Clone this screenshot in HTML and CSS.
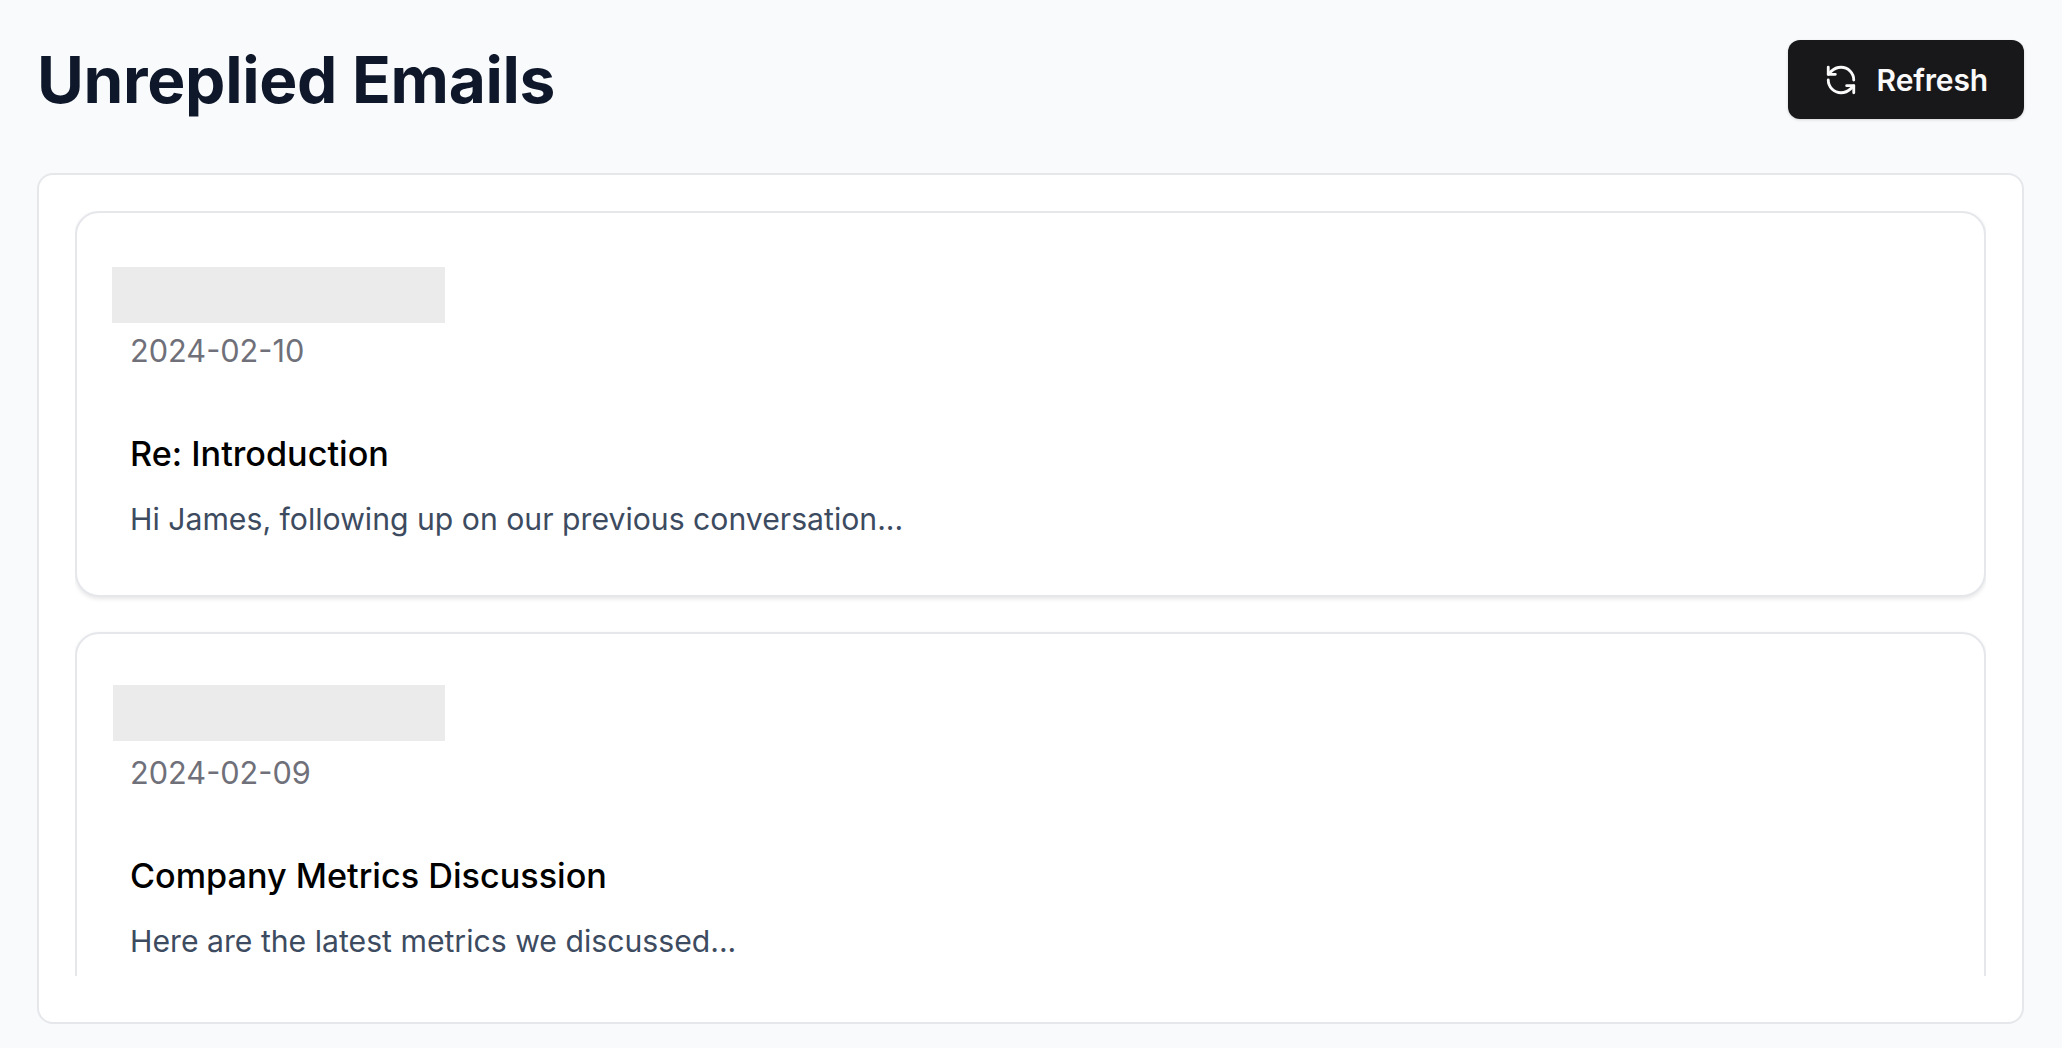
FILE: index.html
```html
<!DOCTYPE html>
<html lang="en">
<head>
    <meta charset="UTF-8">
    <meta name="viewport" content="width=device-width, initial-scale=1.0">
    <title>Unreplied Emails</title>
    <link rel="stylesheet" href="styles.css">
</head>
<body>
    <header class="page-header">
        <h1>Unreplied Emails</h1>
        <button class="btn">
            <svg class="btn-icon" viewBox="0 0 24 24" fill="none" stroke="currentColor" stroke-width="2" stroke-linecap="round" stroke-linejoin="round">
                <path d="M21 12a9 9 0 0 0-9-9 9.75 9.75 0 0 0-6.74 2.74L3 8"/>
                <path d="M3 3v5h5"/>
                <path d="M3 12a9 9 0 0 0 9 9 9.75 9.75 0 0 0 6.74-2.74L21 16"/>
                <path d="M16 16h5v5"/>
            </svg>
            Refresh
        </button>
    </header>

    <main class="panel">
        <div class="email-list">
            <article class="email-card">
                <div class="sender"></div>
                <p class="date">2024-02-10</p>
                <h2 class="subject">Re: Introduction</h2>
                <p class="preview">Hi James, following up on our previous conversation...</p>
            </article>
            <article class="email-card">
                <div class="sender sender-alt"></div>
                <p class="date">2024-02-09</p>
                <h2 class="subject">Company Metrics Discussion</h2>
                <p class="preview">Here are the latest metrics we discussed...</p>
            </article>
        </div>
    </main>
</body>
</html>
```

FILE: styles.css
```css
html, body {
    height: 100%;
}
body {
    margin: 0;
    padding: 40px 38px 24px 37px;
    box-sizing: border-box;
    display: flex;
    flex-direction: column;
    overflow: hidden;
    background-color: #f9fafb;
    font-family: Inter, 'Noto Sans', sans-serif;
}
.page-header {
    display: flex;
    justify-content: space-between;
    align-items: center;
    margin-bottom: 54px;
}
h1 {
    margin: 0;
    font-size: 64px;
    line-height: 79px;
    font-weight: 700;
    letter-spacing: -0.3px;
    color: #0f172a;
}
.btn {
    display: flex;
    align-items: center;
    gap: 19px;
    height: 79px;
    padding: 0 36px;
    border: 0;
    border-radius: 12px;
    background-color: #18181b;
    color: #fafafa;
    font-family: inherit;
    font-size: 30px;
    font-weight: 600;
    letter-spacing: -0.15px;
    box-shadow: 0 1px 3px rgba(0,0,0,0.15);
}
.btn-icon {
    width: 34px;
    height: 34px;
}
.panel {
    flex: 1;
    min-height: 0;
    padding: 36px 36px 46px;
    background: white;
    border: 2px solid #e5e7eb;
    border-radius: 16px;
}
.email-list {
    height: 100%;
    overflow: hidden;
}
.email-card {
    padding: 54px 53px 51px;
    margin-bottom: 35px;
    background: white;
    border: 2px solid #e5e7eb;
    border-radius: 24px;
    box-shadow: 0 2px 4px rgba(0,0,0,0.1);
}
.sender {
    width: 333px;
    height: 56px;
    margin-left: -18px;
    margin-bottom: 8px;
    background-color: #ebebeb;
}
.sender-alt {
    width: 332px;
    margin-top: -3px;
    margin-left: -17px;
    margin-bottom: 12px;
}
.date {
    margin: 0;
    font-size: 30.7px;
    line-height: 40px;
    color: #6f7079;
}
.subject {
    margin: 59px 0 0;
    font-size: 34.2px;
    line-height: 48px;
    font-weight: 500;
    color: #000;
}
.preview {
    margin: 17px 0 1px;
    font-size: 30.2px;
    line-height: 48px;
    color: #3d4b60;
}
```
